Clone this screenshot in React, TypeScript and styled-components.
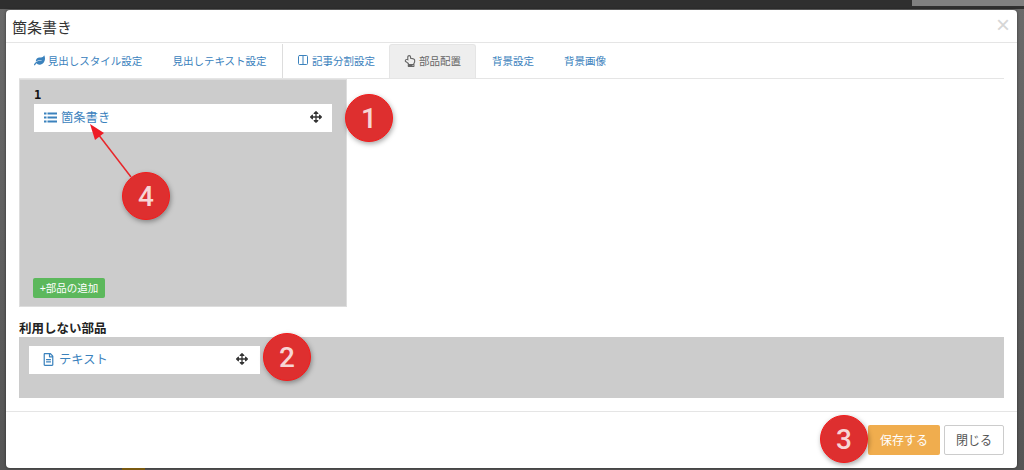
import { ReactNode } from 'react';
import styled, { createGlobalStyle } from 'styled-components';
import { FaLeaf, FaArrowsAlt, FaRegFileAlt, FaRegHandPointUp } from 'react-icons/fa';
import { LuColumns2 } from 'react-icons/lu';

const link = '#3b82bd';

const Global = createGlobalStyle`
	html, body {
		margin: 0;
		padding: 0;
		height: 470px;
		overflow: hidden;
		background: #666;
	}

	* {
		box-sizing: border-box;
	}
`;

interface tabProps {
	label: string,
	icon?: ReactNode,
	active?: boolean,
	width: number
}

interface partProps {
	icon: ReactNode,
	label: string,
	gap: number
}

function ListIcon() {
	return (
		<svg width="13" height="11" viewBox="0 0 13 11" fill="currentColor">
			<path d="M0 .5h2.5v2H0zM3.5 .5H13v2H3.5zM0 4.5h2.5v2H0zM3.5 4.5H13v2H3.5zM0 8.5h2.5v2H0zM3.5 8.5H13v2H3.5z" />
		</svg>
	);
}

function Tab(props: tabProps) {
	return (
		<StyledTab $active={props.active} $width={props.width}>
			{props.icon}
			<span>{props.label}</span>
		</StyledTab>
	);
}

function Part(props: partProps) {
	return (
		<>
			<PartLabel $gap={props.gap}>
				{props.icon}
				<span>{props.label}</span>
			</PartLabel>
			<MoveHandle><FaArrowsAlt size={12} /></MoveHandle>
		</>
	);
}

export default function App() {
	return (
		<Page>
			<Global />
			<TopBar><TopChip /></TopBar>
			<Modal>
				<Header>
					<Title>箇条書き</Title>
					<Close>×</Close>
				</Header>
				<Body>
					<Tabs>
						<Tab width={138} label="見出しスタイル設定" icon={<FaLeaf size={11} />} />
						<Tab width={125} label="見出しテキスト設定" />
						<Separator />
						<Tab width={106} label="記事分割設定" icon={<LuColumns2 size={12} />} />
						<Tab width={87} active label="部品配置" icon={<FaRegHandPointUp size={12} />} />
						<Tab width={74} label="背景設定" />
						<Tab width={70} label="背景画像" />
					</Tabs>
					<Column>
						<ColumnNumber>1</ColumnNumber>
						<PartRow $width={298} $left={10} $right={10}>
							<Part gap={4} icon={<ListIcon />} label="箇条書き" />
						</PartRow>
						<AddButton>+部品の追加</AddButton>
					</Column>
					<UnusedLabel>利用しない部品</UnusedLabel>
					<Unused>
						<PartRow $width={231} $left={13} $right={12}>
							<Part gap={4} icon={<FaRegFileAlt size={13} />} label="テキスト" />
						</PartRow>
					</Unused>
				</Body>
				<Footer>
					<SaveButton>保存する</SaveButton>
					<CloseButton>閉じる</CloseButton>
				</Footer>
			</Modal>
			<BottomChip />
			<Arrow width="1024" height="470" viewBox="0 0 1024 470">
				<line x1="131" y1="177" x2="98" y2="134" stroke="#e8262a" strokeWidth="1.5" />
				<polygon points="90,124 104,133 95,140" fill="#ee1c25" />
			</Arrow>
			<Badge $x={345} $y={94}>1</Badge>
			<Badge $x={263} $y={333}>2</Badge>
			<Badge $x={820} $y={415}>3</Badge>
			<Badge $x={122} $y={172}>4</Badge>
		</Page>
	);
}

const Page = styled.div`
	position: relative;
	width: 1024px;
	height: 470px;
	overflow: hidden;
	padding: 10px 7px 2px 6px;
	font-family: "Liberation Sans", "Noto Sans CJK JP", sans-serif;
	background: linear-gradient(#6a6a6a, #555);
`;

const TopBar = styled.div`
	position: absolute;
	top: 0;
	left: 0;
	right: 0;
	height: 9px;
	background-color: #2f2f2f;
`;

const TopChip = styled.div`
	position: absolute;
	top: 0;
	left: 912px;
	right: 0;
	height: 6px;
	background-color: #808080;
`;

const BottomChip = styled.div`
	position: absolute;
	left: 122px;
	bottom: 0;
	width: 23px;
	height: 2px;
	background-color: #7a5a10;
`;

const Modal = styled.div`
	position: relative;
	display: flex;
	flex-direction: column;
	height: 458px;
	background-color: #fff;
	border-radius: 4px;
	box-shadow: 0 0 3px rgba(0, 0, 0, .5);
`;

const Header = styled.div`
	display: flex;
	justify-content: space-between;
	align-items: center;
	height: 33px;
	padding: 0 7px 0 6px;
	border-bottom: 1px solid #e5e5e5;
`;

const Title = styled.h4`
	margin: 0;
	font-size: 15px;
	font-weight: 400;
	color: #333;
`;

const Close = styled.span`
	font-size: 24px;
	line-height: 21px;
	margin-top: -4px;
	color: #d6d6d6;
`;

const Body = styled.div`
	flex: 1;
	padding: 1px 13px 0;
`;

const Tabs = styled.div`
	display: flex;
	height: 35px;
	width: 985px;
	border-bottom: 1px solid #e5e5e5;
`;

const StyledTab = styled.div<{ $active?: boolean, $width: number }>`
	display: flex;
	justify-content: center;
	align-items: center;
	gap: 3px;
	width: ${(p) => p.$width}px;
	height: 34px;
	padding-bottom: 2px;
	font-size: 10.5px;
	color: ${(p) => (p.$active ? '#666' : link)};
	background-color: ${(p) => (p.$active ? '#eee' : 'transparent')};
	border: ${(p) => (p.$active ? '1px solid #e5e5e5' : 'none')};
	border-bottom: none;
	border-radius: 3px 3px 0 0;
`;

const Separator = styled.div`
	width: 1px;
	height: 34px;
	background-color: #ddd;
`;

const Column = styled.div`
	display: flex;
	flex-direction: column;
	align-items: flex-start;
	width: 328px;
	height: 228px;
	padding: 8px 14px 8px 14px;
	background-color: #ccc;
	border: 1px solid #ddd;
`;

const ColumnNumber = styled.div`
	font-family: "DejaVu Sans Mono", monospace;
	font-size: 12px;
	line-height: 14px;
	font-weight: 700;
	color: #111;
	margin-bottom: 2px;
`;

const PartRow = styled.div<{ $width: number, $left: number, $right: number }>`
	display: flex;
	justify-content: space-between;
	align-items: center;
	flex-shrink: 0;
	width: ${(p) => p.$width}px;
	height: 28px;
	padding: 0 ${(p) => p.$right}px 2px ${(p) => p.$left}px;
	background-color: #fff;
`;

const PartLabel = styled.div<{ $gap: number }>`
	display: flex;
	align-items: center;
	gap: ${(p) => p.$gap}px;
	font-size: 12.3px;
	color: ${link};
`;

const MoveHandle = styled.span`
	display: flex;
	color: #333;
`;

const AddButton = styled.div`
	display: flex;
	align-items: center;
	justify-content: center;
	width: 72px;
	height: 20px;
	margin-top: auto;
	margin-left: -1px;
	padding-bottom: 1px;
	font-size: 10.5px;
	color: #fff;
	background-color: #5cb85c;
	border-radius: 2px;
`;

const UnusedLabel = styled.div`
	margin-top: 14px;
	height: 16px;
	font-size: 12.5px;
	line-height: 16px;
	font-weight: 700;
	color: #222;
`;

const Unused = styled.div`
	height: 61px;
	padding: 9px 10px;
	background-color: #ccc;
`;

const Footer = styled.div`
	display: flex;
	justify-content: flex-end;
	align-items: center;
	gap: 4px;
	height: 57px;
	padding: 0 13px 0 0;
	border-top: 1px solid #e5e5e5;
`;

const SaveButton = styled.div`
	display: flex;
	align-items: center;
	justify-content: center;
	width: 72px;
	height: 30px;
	padding-bottom: 1px;
	font-size: 12px;
	color: #fff;
	background-color: #f0ad4e;
	border-radius: 2px;
`;

const CloseButton = styled.div`
	display: flex;
	align-items: center;
	justify-content: center;
	width: 60px;
	height: 30px;
	padding-bottom: 1px;
	font-size: 12px;
	color: #555;
	background-color: #fff;
	border: 1px solid #ccc;
	border-radius: 2px;
`;

const Arrow = styled.svg`
	position: absolute;
	top: 0;
	left: 0;
	pointer-events: none;
`;

const Badge = styled.div<{ $x: number, $y: number }>`
	position: absolute;
	left: ${(p) => p.$x}px;
	top: ${(p) => p.$y}px;
	display: flex;
	align-items: center;
	justify-content: center;
	width: 48px;
	height: 48px;
	font-family: "Roboto", "Liberation Sans", sans-serif;
	font-size: 28px;
	font-weight: 500;
	color: #f7d5d5;
	background-color: #de2f2f;
	border: 1.5px solid #f51b1b;
	border-radius: 50%;
	box-shadow: 1px 2px 5px rgba(0, 0, 0, .35);
`;
